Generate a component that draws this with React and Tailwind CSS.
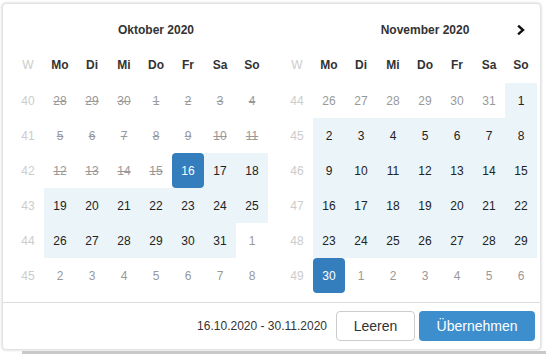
import React from "react";

const DAYS = ["Mo", "Di", "Mi", "Do", "Fr", "Sa", "So"];

const octRows = [
  { w: 40, d: [["28", "dis"], ["29", "dis"], ["30", "dis"], ["1", "dis"], ["2", "dis"], ["3", "dis"], ["4", "dis"]] },
  { w: 41, d: [["5", "dis"], ["6", "dis"], ["7", "dis"], ["8", "dis"], ["9", "dis"], ["10", "dis"], ["11", "dis"]] },
  { w: 42, d: [["12", "dis"], ["13", "dis"], ["14", "dis"], ["15", "dis"], ["16", "sel"], ["17", "in"], ["18", "in"]] },
  { w: 43, d: [["19", "in"], ["20", "in"], ["21", "in"], ["22", "in"], ["23", "in"], ["24", "in"], ["25", "in"]] },
  { w: 44, d: [["26", "in"], ["27", "in"], ["28", "in"], ["29", "in"], ["30", "in"], ["31", "in"], ["1", "off"]] },
  { w: 45, d: [["2", "off"], ["3", "off"], ["4", "off"], ["5", "off"], ["6", "off"], ["7", "off"], ["8", "off"]] },
];

const novRows = [
  { w: 44, d: [["26", "off"], ["27", "off"], ["28", "off"], ["29", "off"], ["30", "off"], ["31", "off"], ["1", "in"]] },
  { w: 45, d: [["2", "in"], ["3", "in"], ["4", "in"], ["5", "in"], ["6", "in"], ["7", "in"], ["8", "in"]] },
  { w: 46, d: [["9", "in"], ["10", "in"], ["11", "in"], ["12", "in"], ["13", "in"], ["14", "in"], ["15", "in"]] },
  { w: 47, d: [["16", "in"], ["17", "in"], ["18", "in"], ["19", "in"], ["20", "in"], ["21", "in"], ["22", "in"]] },
  { w: 48, d: [["23", "in"], ["24", "in"], ["25", "in"], ["26", "in"], ["27", "in"], ["28", "in"], ["29", "in"]] },
  { w: 49, d: [["30", "sel"], ["1", "off"], ["2", "off"], ["3", "off"], ["4", "off"], ["5", "off"], ["6", "off"]] },
];

function Cell({ label, type }) {
  let cls = "w-[32px] h-[35px] flex items-center justify-center text-[12px] ";
  if (type === "dis") cls += "text-[#999] line-through";
  else if (type === "off") cls += "text-[#999]";
  else if (type === "in") cls += "bg-[#ebf4f8] text-[#222]";
  else if (type === "sel") cls += "bg-[#357ebd] text-white rounded";
  else cls += "text-[#222]";
  return <div className={cls}>{label}</div>;
}

function Calendar({ title, rows, next }) {
  return (
    <div className="w-[256px] flex flex-col">
      <div className="h-[35px] grid grid-cols-8 items-center">
        <div className="col-start-2 col-span-7 row-start-1 text-center text-[12px] font-bold text-[#333]">{title}</div>
        {next && (
          <div className="col-start-8 row-start-1 flex items-center justify-center">
            <svg width="10" height="10" viewBox="0 0 10 10">
              <polyline points="3,1.5 7,5 3,8.5" fill="none" stroke="#111" strokeWidth="2.4" strokeLinecap="square" />
            </svg>
          </div>
        )}
      </div>
      <div className="h-[36px] flex items-center">
        <div className="w-[32px] text-center text-[12px] text-[#ccc]">W</div>
        {DAYS.map((d) => (
          <div key={d} className="w-[32px] text-center text-[12px] font-bold text-[#333]">
            {d}
          </div>
        ))}
      </div>
      {rows.map((r) => (
        <div key={r.w} className="flex h-[35px]">
          <div className="w-[32px] h-[35px] flex items-center justify-center text-[12px] text-[#ccc]">{r.w}</div>
          {r.d.map(([l, t], i) => (
            <Cell key={i} label={l} type={t} />
          ))}
        </div>
      ))}
    </div>
  );
}

export default function App() {
  return (
    <div
      className="w-[546px] h-[354px] bg-white overflow-hidden flex flex-col"
      style={{ fontFamily: '"Liberation Sans", Arial, sans-serif' }}
    >
      <div className="ml-[2px] mt-[3px] w-[539px] h-[347px] bg-white border border-[#e3e3e3] rounded-[4px] shadow-[0_0_3px_rgba(0,0,0,0.2)] flex flex-col">
        <div className="flex gap-[13px] pl-[9px] pt-[8px]">
          <Calendar title="Oktober 2020" rows={octRows} />
          <Calendar title="November 2020" rows={novRows} next />
        </div>
        <div className="mt-[9px] border-t border-[#ddd] flex items-center justify-end pt-[8px] pr-[5px]">
          <span className="text-[12px] text-[#333] mr-[9px]">16.10.2020 - 30.11.2020</span>
          <button className="w-[79px] h-[30px] border border-[#ccc] rounded-[4px] bg-white text-[14px] text-[#333] mr-[4px]">
            Leeren
          </button>
          <button className="w-[116px] h-[30px] rounded-[4px] bg-[#3d8ecd] text-[14px] text-white">
            Übernehmen
          </button>
        </div>
      </div>
      <div className="ml-[22px] mt-[1px] h-[3px] bg-[#c8c8c8]" />
    </div>
  );
}
